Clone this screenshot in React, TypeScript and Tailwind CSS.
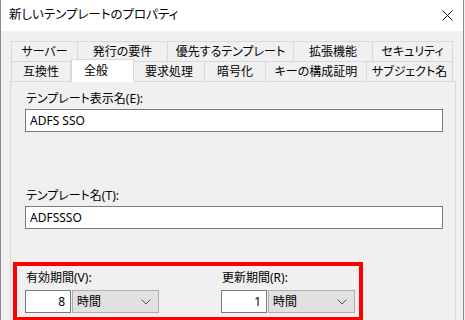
const row1 = [
  { label: "サーバー", w: "w-[67px]" },
  { label: "発行の要件", w: "w-[90px]" },
  { label: "優先するテンプレート", w: "w-[126px]" },
  { label: "拡張機能", w: "w-[79px]" },
  { label: "セキュリティ", w: "w-[80px]" },
];

const row2 = [
  { label: "互換性", w: "w-[60px]" },
  { label: "全般", w: "w-[63px]", active: true },
  { label: "要求処理", w: "w-[71px]" },
  { label: "暗号化", w: "w-[61px]" },
  { label: "キーの構成証明", w: "w-[101px]" },
  { label: "サブジェクト名", w: "w-[86px]" },
];

function Chevron() {
  return (
    <svg width="10" height="6" viewBox="0 0 10 6" className="shrink-0">
      <path d="M0.5 0.5 L5 5 L9.5 0.5" fill="none" stroke="#555" strokeWidth="1" />
    </svg>
  );
}

function Period({ label, value }: { label: string; value: string }) {
  return (
    <div className="flex flex-col">
      <div className="h-[16px] leading-[16px] pl-[1px]">{label}</div>
      <div className="flex mt-[4px]">
        <div className="w-[46px] h-[23px] bg-white border border-[#7a7a7a] flex items-center justify-end pr-[5px]">
          {value}
        </div>
        <div className="w-[87px] h-[23px] ml-[1px] bg-[#e1e1e1] border border-[#adadad] flex items-center justify-between pl-[4px] pr-[7px]">
          <span>時間</span>
          <Chevron />
        </div>
      </div>
    </div>
  );
}

export default function App() {
  return (
    <div
      className="w-[465px] h-[320px] overflow-hidden bg-[#f0f0f0] text-[12px] text-black [font-feature-settings:'palt']"
      style={{ fontFamily: '"Noto Sans", "Noto Sans CJK JP", sans-serif' }}
    >
      <div className="w-[464px] h-[320px] border-l border-r border-[#8a8a8a] flex flex-col">
        {/* title bar */}
        <div className="h-[31px] bg-white flex items-center justify-between pl-[8px] pr-[10px] shrink-0">
          <span className="text-[12.5px]">新しいテンプレートのプロパティ</span>
          <svg width="11" height="11" viewBox="0 0 11 11">
            <path d="M0.5 0.5 L10.5 10.5 M10.5 0.5 L0.5 10.5" stroke="#111" strokeWidth="1" />
          </svg>
        </div>

        <div className="pt-[10px] pl-[9px]">
          {/* tabs */}
          <div className="flex h-[20px] pl-[1px]">
            {row1.map((t, i) => (
              <div
                key={t.label}
                className={`${t.w} h-[20px] border-t border-r border-[#d9d9d9] ${i === 0 ? "border-l" : ""} flex items-center justify-center leading-none`}
              >
                {t.label}
              </div>
            ))}
          </div>
          <div className="flex h-[20px] pl-[1px] relative z-10">
            {row2.map((t, i) =>
              t.active ? (
                <div
                  key={t.label}
                  className={`${t.w} h-[23px] -mt-[2px] bg-white border-t border-r border-l border-[#d9d9d9] flex items-start pt-[3px] pl-[12px] leading-[16px]`}
                >
                  {t.label}
                </div>
              ) : (
                <div
                  key={t.label}
                  className={`${t.w} h-[20px] border-t border-r border-[#d9d9d9] ${i === 0 ? "border-l" : ""} flex items-center justify-center leading-none`}
                >
                  {t.label}
                </div>
              )
            )}
          </div>

          {/* panel */}
          <div className="w-[446px] h-[260px] border border-[#d9d9d9] bg-[#f0f0f0] pt-[9px]">
            <div className="pl-[14px]">
              <div className="h-[16px] leading-[16px] pl-[1px]">テンプレート表示名(E):</div>
              <div className="w-[418px] h-[23px] mt-[2px] bg-white border border-[#7a7a7a] flex items-center pl-[4px]">
                ADFS SSO
              </div>

              <div className="h-[16px] leading-[16px] pl-[1px] mt-[56px]">テンプレート名(T):</div>
              <div className="w-[418px] h-[23px] mt-[2px] bg-white border border-[#7a7a7a] flex items-center pl-[4px]">
                ADFSSSO
              </div>
            </div>

            <div className="mt-[33px] ml-[2px] w-[350px] h-[59px] border-[4px] border-[#ff0000] pt-[4px] pl-[8px] flex gap-[62px]">
              <Period label="有効期間(V):" value="8" />
              <Period label="更新期間(R):" value="1" />
            </div>
          </div>
        </div>
      </div>
    </div>
  );
}
